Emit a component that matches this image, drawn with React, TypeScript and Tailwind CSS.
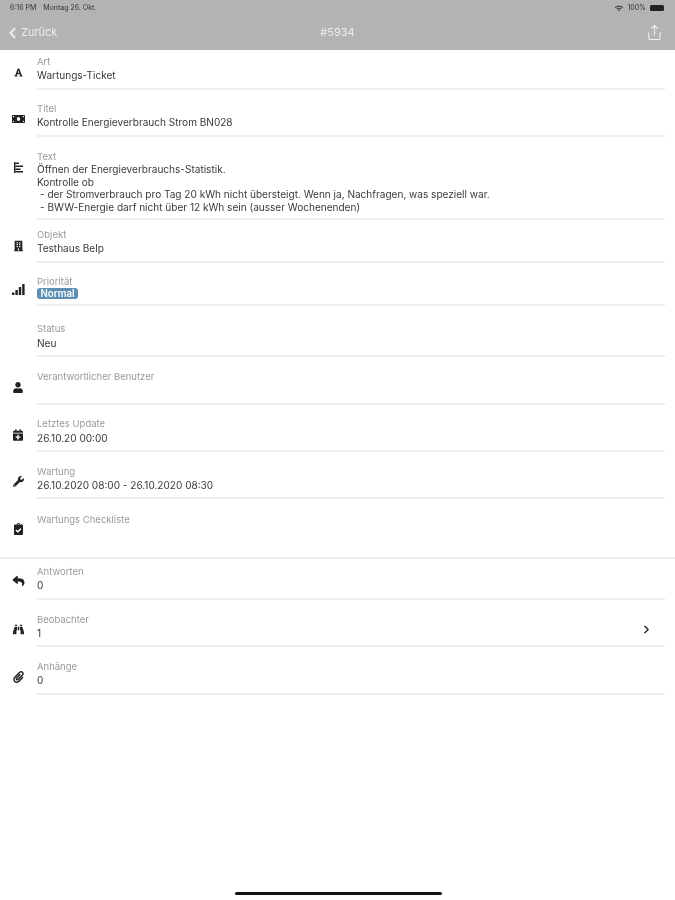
import type { ReactNode } from "react";
import { ChevronLeft, ChevronRight, Share } from "lucide-react";
import {
  FaBinoculars,
  FaBuilding,
  FaCalendarPlus,
  FaClipboardCheck,
  FaFont,
  FaMoneyBill,
  FaPaperclip,
  FaReply,
  FaUser,
  FaWifi,
  FaWrench,
} from "react-icons/fa";

function TextIcon() {
  return (
    <svg viewBox="0 0 11 11" className="h-[11px] w-[11px]" fill="currentColor">
      <rect x="1" y="0" width="1.5" height="11" />
      <rect x="2.5" y="0.5" width="3.5" height="1.5" />
      <rect x="2.5" y="3.5" width="7.5" height="1.5" />
      <rect x="2.5" y="6.5" width="5" height="1.5" />
      <rect x="2.5" y="9" width="7.5" height="1.5" />
    </svg>
  );
}

function SignalIcon() {
  return (
    <svg viewBox="0 0 13 11" className="h-[11px] w-[13px]" fill="currentColor">
      <rect x="0" y="8.5" width="2.4" height="2.5" />
      <rect x="3.4" y="6" width="2.4" height="5" />
      <rect x="6.8" y="3" width="2.4" height="8" />
      <rect x="10.2" y="0" width="2.4" height="11" />
    </svg>
  );
}

function Row({
  icon,
  label,
  className,
  iconClass = "items-end pb-[12px]",
  children,
}: {
  icon?: ReactNode;
  label: string;
  className: string;
  iconClass?: string;
  children?: ReactNode;
}) {
  return (
    <div className="flex">
      <div className={`flex w-[37px] shrink-0 justify-center pr-[1px] text-[#222222] ${iconClass}`}>{icon}</div>
      <div className={`mr-[10px] min-w-0 flex-1 border-b-2 border-[#eeeeee] ${className}`}>
        <div className="text-[9.5px] leading-[14px] text-[#9a9a9a]">{label}</div>
        <div className="text-[10.05px] leading-[12.6px] text-[#3a3a3a]">{children}</div>
      </div>
    </div>
  );
}

export default function App() {
  return (
    <div
      className="flex h-[900px] w-[675px] flex-col overflow-hidden bg-white blur-[0.5px]"
      style={{ fontFamily: "Inter, 'Liberation Sans', sans-serif" }}
    >
      <header className="h-[50px] shrink-0 bg-[#b3b3b3] text-white">
        <div className="flex h-[16px] items-center justify-between pl-[10px] pr-[11px] text-[7px] text-[#333333]">
          <div className="flex gap-[7px]">
            <span>6:16 PM</span>
            <span>Montag 26. Okt.</span>
          </div>
          <div className="flex items-center gap-[4px]">
            <FaWifi className="h-[7px] w-[8px]" />
            <span>100%</span>
            <div className="h-[6px] w-[14px] rounded-[1.5px] bg-[#222222]" />
          </div>
        </div>
        <div className="relative flex h-[34px] items-center justify-between pl-[4px] pr-[12px] pb-[1px]">
          <div className="flex items-center text-[11px] text-[#eeeeee]">
            <ChevronLeft className="h-[20px] w-[17px]" strokeWidth={2.5} />
            <span>Zurück</span>
          </div>
          <div className="absolute left-0 right-0 text-center text-[11px] text-[#eeeeee]">#5934</div>
          <Share className="h-[17px] w-[17px] text-[#f0f0f0]" strokeWidth={1.5} />
        </div>
      </header>

      <Row icon={<FaFont className="h-[9px] w-[9px]" />} iconClass="items-end pb-[13px]" label="Art" className="h-[40px] pt-[5px]">Wartungs-Ticket</Row>
      <Row icon={<FaMoneyBill className="h-[12px] w-[13px]" />} label="Titel" className="h-[47px] pt-[12px]">Kontrolle Energieverbrauch Strom BN028</Row>
      <Row icon={<TextIcon />} iconClass="items-start pt-[25px]" label="Text" className="h-[83px] pt-[13px]">
        <div className="-mt-[1px]">Öffnen der Energieverbrauchs-Statistik.</div>
        <div>Kontrolle ob</div>
        <div className="pl-[3px]">- der Stromverbrauch pro Tag 20 kWh nicht übersteigt. Wenn ja, Nachfragen, was speziell war.</div>
        <div className="pl-[3px]">- BWW-Energie darf nicht über 12 kWh sein (ausser Wochenenden)</div>
      </Row>
      <Row icon={<FaBuilding className="h-[12px] w-[9px]" />} iconClass="items-end pb-[11px]" label="Objekt" className="h-[43px] pt-[8px]">Testhaus Belp</Row>
      <Row icon={<SignalIcon />} iconClass="items-end pb-[11px]" label="Priorität" className="h-[43px] pt-[12px]">
        <span className="-mt-[1px] block w-fit rounded-[3px] bg-[#5d8fb5] px-[3.5px] text-[9.7px] font-semibold leading-[11px] text-white">Normal</span>
      </Row>
      <Row label="Status" className="h-[51px] pt-[16px]">
        <div className="mt-[1px]">Neu</div>
      </Row>
      <Row icon={<FaUser className="h-[11px] w-[10px]" />} label="Verantwortlicher Benutzer" className="h-[48px] pt-[13px]" />
      <Row icon={<FaCalendarPlus className="h-[12px] w-[10px]" />} iconClass="items-end pb-[11px]" label="Letztes Update" className="h-[47px] pt-[12px]">
        <div className="mt-[1px]">26.10.20 00:00</div>
      </Row>
      <Row icon={<FaWrench className="h-[11px] w-[11px]" />} label="Wartung" className="h-[47px] pt-[13px]">26.10.2020 08:00 - 26.10.2020 08:30</Row>

      <div className="flex h-[60px] border-b-2 border-[#eeeeee]">
        <div className="flex w-[37px] shrink-0 items-end justify-center pr-[1px] pb-[22px] text-[#222222]">
          <FaClipboardCheck className="h-[12px] w-[9px]" />
        </div>
        <div className="pt-[14px] text-[9.5px] leading-[14px] text-[#9a9a9a]">Wartungs Checkliste</div>
      </div>

      <Row icon={<FaReply className="h-[12px] w-[13px]" />} iconClass="items-end pb-[13px]" label="Antworten" className="h-[41px] pt-[6px]">0</Row>
      <div className="relative">
        <Row icon={<FaBinoculars className="h-[11px] w-[11px]" />} label="Beobachter" className="h-[47px] pt-[13px]">1</Row>
        <ChevronRight className="absolute right-[22px] top-[23px] h-[13px] w-[13px] text-[#222222]" strokeWidth={2.5} />
      </div>
      <Row icon={<FaPaperclip className="h-[12px] w-[11px]" />} label="Anhänge" className="h-[48px] pt-[13px]">0</Row>

      <div className="mt-auto flex justify-center pb-[5px] pl-[1px]">
        <div className="h-[3px] w-[207px] rounded-full bg-[#111111]" />
      </div>
    </div>
  );
}
